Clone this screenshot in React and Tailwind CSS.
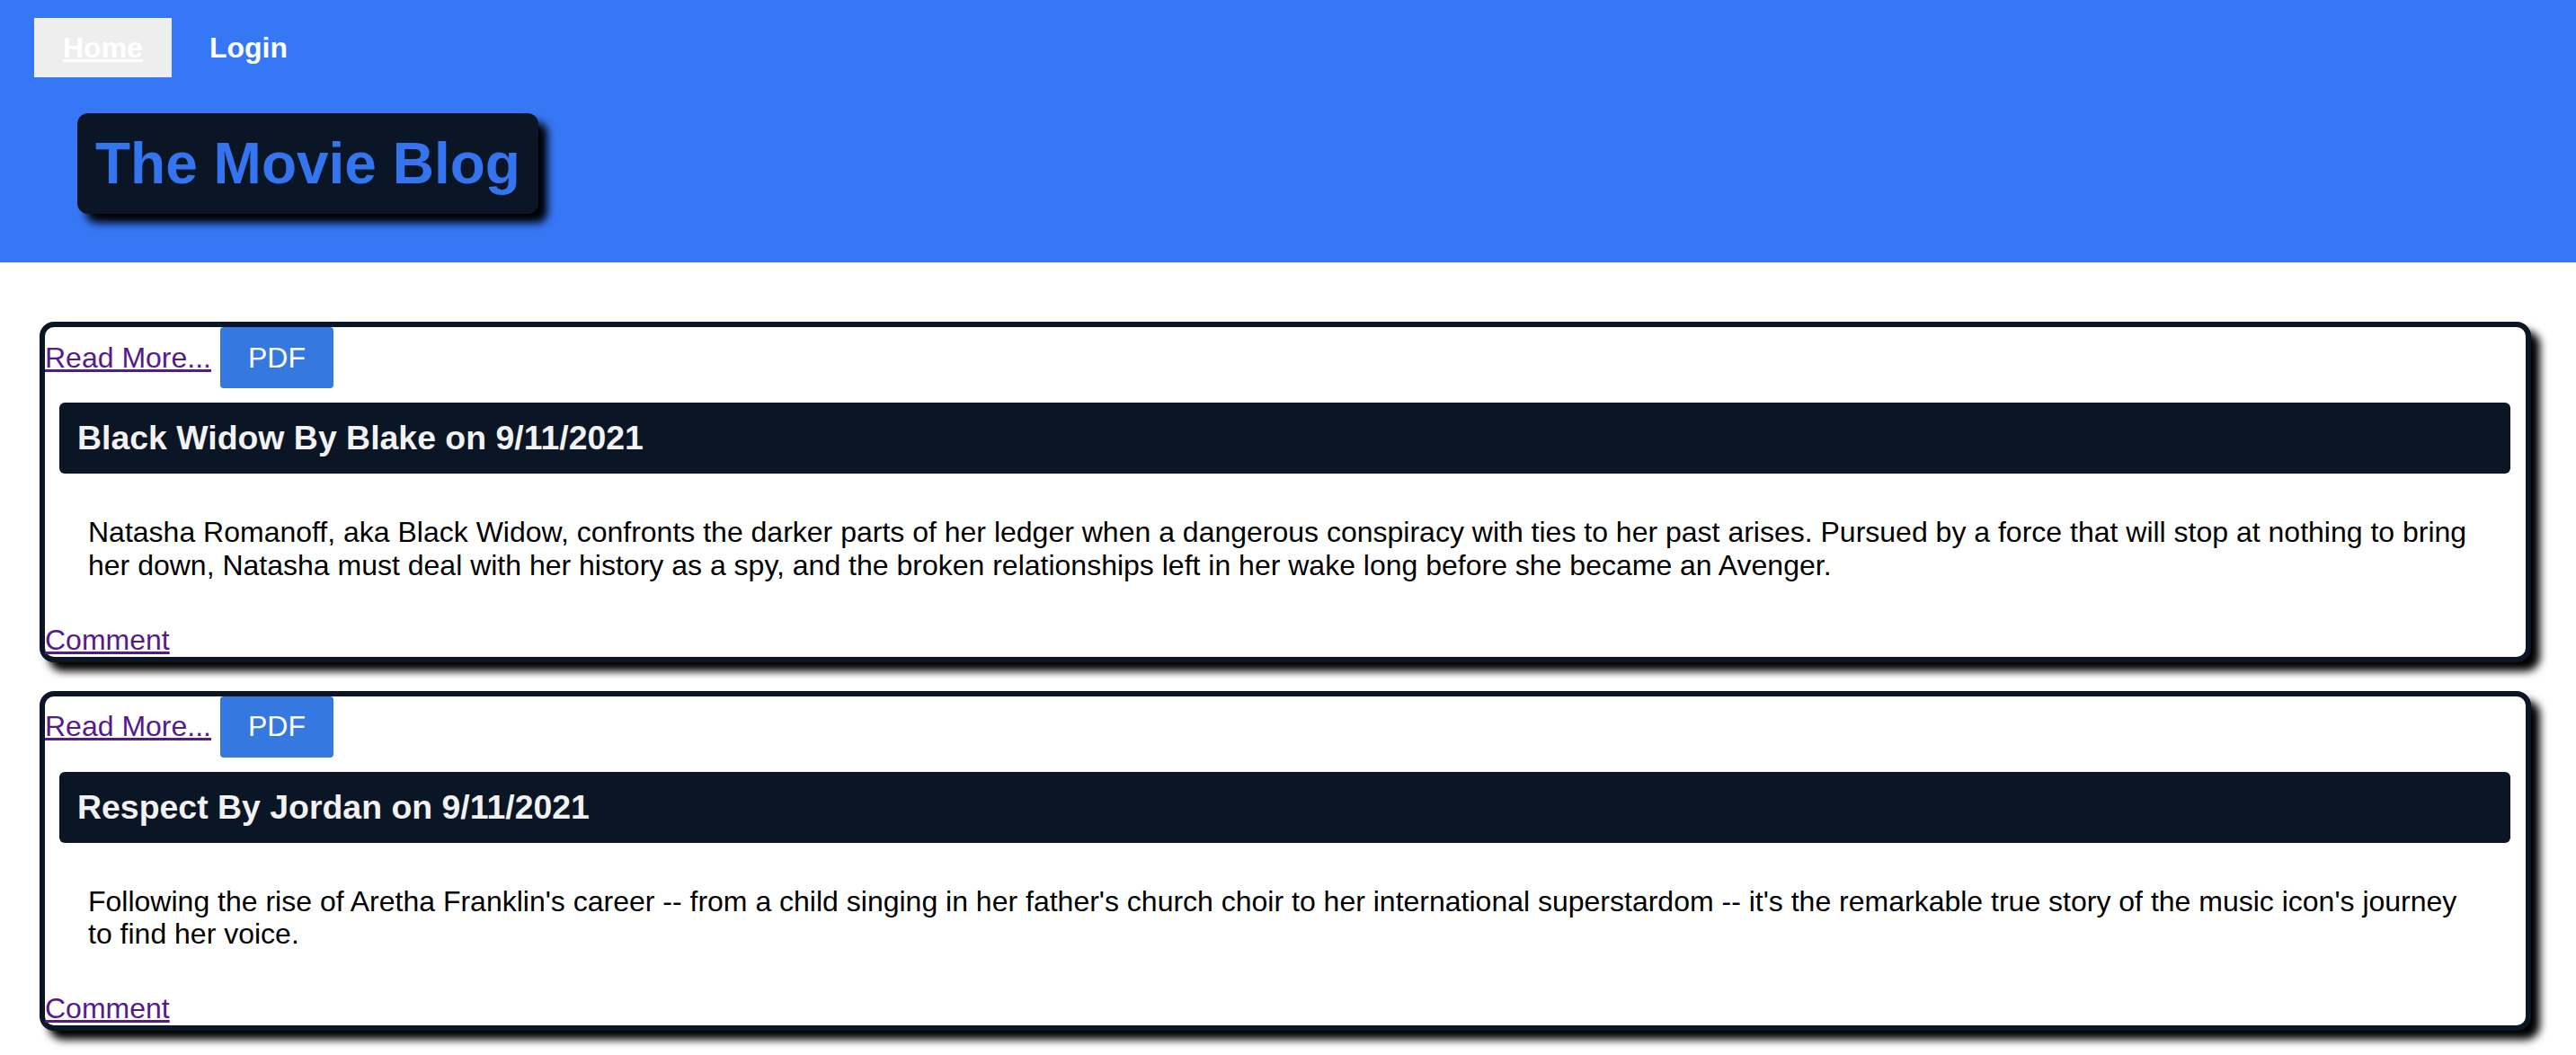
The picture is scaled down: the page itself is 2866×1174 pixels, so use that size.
const posts = [
  {
    title: 'Black Widow By Blake on 9/11/2021',
    body: 'Natasha Romanoff, aka Black Widow, confronts the darker parts of her ledger when a dangerous conspiracy with ties to her past arises. Pursued by a force that will stop at nothing to bring her down, Natasha must deal with her history as a spy, and the broken relationships left in her wake long before she became an Avenger.',
  },
  {
    title: 'Respect By Jordan on 9/11/2021',
    body: "Following the rise of Aretha Franklin's career -- from a child singing in her father's church choir to her international superstardom -- it's the remarkable true story of the music icon's journey to find her voice.",
  },
]

const PostCard = ({ post }) => (
  <div className="ml-[44px] mr-[50px] border-[6px] border-[#0a1526] rounded-[16px] bg-white shadow-[10px_10px_10px_#000]">
    <div className="flex items-baseline h-[68px]">
      <a href="#" className="text-[32px] leading-[37px] text-[#551a8b] underline">
        Read More...
      </a>
      <button
        type="button"
        className="ml-[10px] h-[68px] px-[31px] rounded-[4px] bg-[#3578e0] text-white text-[32px] leading-[37px]"
      >
        PDF
      </button>
    </div>

    <h3 className="mt-[16px] ml-[16px] mr-[17px] px-[20px] py-[18px] rounded-[6px] bg-[#0a1526] text-[#f2f2f2] text-[37.44px] leading-[43px] font-bold">
      {post.title}
    </h3>

    <p className="mt-[47px] mb-[46px] px-[48px] text-[32px] leading-[36.8px] text-black">{post.body}</p>

    <a href="#" className="block w-fit text-[32px] leading-[37px] text-[#551a8b] underline">
      Comment
    </a>
  </div>
)

export default function App() {
  return (
    <div className="min-h-screen bg-white font-['Liberation_Sans',Arial,sans-serif]">
      <header className="h-[292px] bg-[#3677f5]">
        <nav className="flex gap-[10px] pt-[20px] pl-[38px]">
          <a href="#" className="flex items-center h-[66px] px-[32px] bg-[#eeeeee] text-white text-[32px] font-bold underline">
            Home
          </a>
          <a href="#" className="flex items-center h-[66px] px-[32px] text-white text-[32px] font-bold">
            Login
          </a>
        </nav>
        <h1 className="inline-block mt-[40px] ml-[86px] px-[20px] py-[19px] rounded-[12px] bg-[#0a1526] text-[#3474ee] text-[64px] leading-[74px] font-bold shadow-[10px_10px_10px_#000]">
          The Movie Blog
        </h1>
      </header>

      <main className="flex flex-col gap-[32px] pt-[66px] pb-[40px]">
        {posts.map((p) => (
          <PostCard key={p.title} post={p} />
        ))}
      </main>
    </div>
  )
}
